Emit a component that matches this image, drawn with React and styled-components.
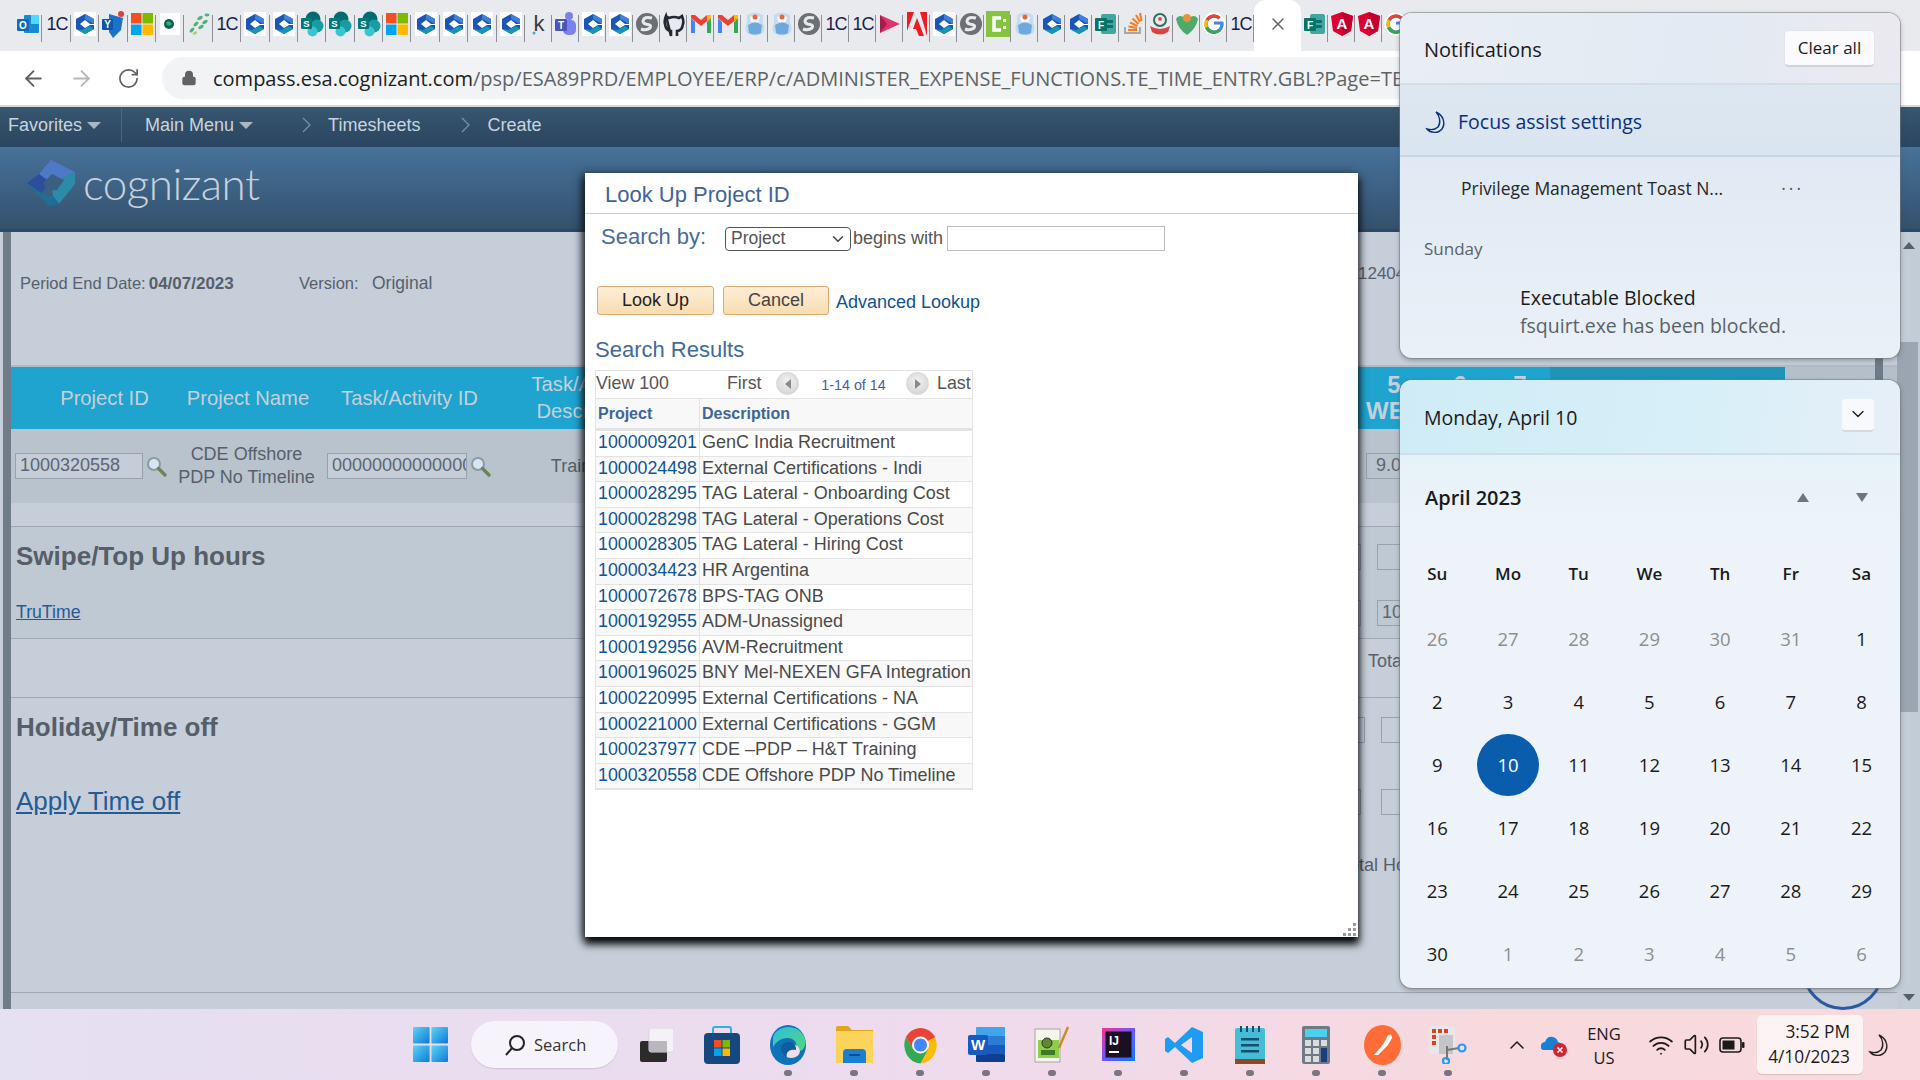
import React from 'react';
import styled, { createGlobalStyle } from 'styled-components';
import { ChevronDown, RotateCw, ArrowLeft, ArrowRight, Lock, X, Wifi, Volume2 } from 'lucide-react';

const GlobalStyle = createGlobalStyle`
  html, body {
    margin: 0;
    padding: 0;
    overflow: hidden;
    background: #c5ced9;
  }
  * { box-sizing: border-box; }
`;

const ARIAL = '"Liberation Sans", Arial, sans-serif';
const SEGOE = '"Open Sans", "Noto Sans", sans-serif';

const Desktop = styled.div`
  position: relative;
  width: 1920px;
  height: 1080px;
  overflow: hidden;
  display: flex;
  flex-direction: column;
  font-family: ${ARIAL};
`;

/* ---------- browser chrome ---------- */

const TabStrip = styled.div`
  height: 51px;
  flex: none;
  background: #e8eaed;
  padding-left: 14px;
  display: flex;
  align-items: stretch;
`;

const PinnedTab = styled.div`
  width: ${p => p.$w}px;
  flex: none;
  display: flex;
  align-items: center;
  justify-content: center;
  padding-bottom: 4px;
  position: relative;
  &::after {
    content: '';
    position: absolute;
    right: 0;
    top: 15px;
    height: 27px;
    width: 1px;
    background: #8b8e92;
  }
`;

const ActiveTab = styled.div`
  width: 47px;
  flex: none;
  background: #fff;
  border-radius: 12px 12px 0 0;
  display: flex;
  align-items: center;
  justify-content: center;
  color: #5f6368;
  padding-bottom: 4px;
`;

const AddressBar = styled.div`
  height: 56px;
  flex: none;
  background: #fff;
  border-bottom: 2px solid #d7d9dc;
  display: flex;
  align-items: center;
  padding: 0 20px 0 21px;
`;

const NavArrow = styled.div`
  width: 48px;
  flex: none;
  display: flex;
  align-items: center;
  color: ${p => p.$off ? '#b4b7bb' : '#5f6368'};
`;

const Omnibox = styled.div`
  flex: 1;
  height: 42px;
  margin-left: -3px;
  background: #f1f3f4;
  border-radius: 21px;
  display: flex;
  align-items: center;
  padding-left: 19px;
  overflow: hidden;
  white-space: nowrap;
  font-family: ${SEGOE};
  font-size: 20px;
  color: #5f6368;
`;

const UrlHost = styled.span`
  color: #202124;
  margin-left: 16px;
`;

/* ---------- portal header ---------- */

const NavBar = styled.div`
  height: 40px;
  flex: none;
  background: linear-gradient(#37566f, #2a4560);
  display: flex;
  align-items: center;
  color: #c9d4de;
  font-size: 18px;
  padding-bottom: 4px;
`;

const NavItem = styled.div`
  display: flex;
  align-items: center;
  gap: 5px;
  margin-left: ${p => p.$ml}px;
  height: 100%;
`;

const NavDivider = styled.div`
  width: 1px;
  height: 34px;
  background: #4a6780;
  margin-left: 20px;
`;

const Caret = styled.span`
  width: 0;
  height: 0;
  border-left: 7px solid transparent;
  border-right: 7px solid transparent;
  border-top: 7px solid #a9b8c6;
`;

const Crumb = styled.span`
  color: #7e93a7;
  display: flex;
  margin-right: 12px;
`;

const Banner = styled.div`
  height: 85px;
  flex: none;
  background: linear-gradient(#47729a, #33516c);
  border-bottom: 3px solid #2d4960;
  display: flex;
  align-items: center;
  padding: 0 0 10px 27px;
`;

const LogoText = styled.span`
  font-family: Lato, sans-serif;
  font-weight: 300;
  font-size: 44px;
  letter-spacing: -0.5px;
  line-height: 1;
  color: #c7d2dc;
  margin-left: 6px;
  margin-top: -1px;
`;

/* ---------- timesheet page behind the dialog ---------- */

const Content = styled.div`
  flex: 1;
  display: flex;
  background: #c5ced9;
  position: relative;
  min-height: 0;
  color: #56606c;
`;

const LeftEdge = styled.div`
  width: 8px;
  margin-left: 3px;
  flex: none;
  background: #707c88;
`;

const Main = styled.div`
  flex: 1;
  min-width: 0;
  display: flex;
  flex-direction: column;
  position: relative;
`;

const Scrollbar = styled.div`
  width: 23px;
  flex: none;
  display: flex;
  flex-direction: column;
  align-items: center;
  background: #c2ccd7;
  justify-content: space-between;
`;

const ScrollThumb = styled.div`
  width: 21px;
  height: 370px;
  margin-right: 2px;
  background: #9aa5b1;
  margin-top: -190px;
`;

const ScrollArrow = styled.div`
  width: 0;
  height: 0;
  margin: ${p => (p.$down ? '0 0 8px' : '10px 0 0')};
  border-left: 6px solid transparent;
  border-right: 6px solid transparent;
  ${p => (p.$down ? 'border-top: 7px solid #555f6a;' : 'border-bottom: 7px solid #555f6a;')}
`;

const Summary = styled.div`
  height: 135px;
  flex: none;
  display: flex;
  padding: 42px 0 0 9px;
  font-size: 16.5px;
`;

const SummaryField = styled.div`
  width: ${p => p.$w}px;
  flex: none;
  white-space: nowrap;
  font-size: ${p => p.$fs || 16.5}px;
  margin-top: ${p => p.$mt || 0}px;
`;

const StrongDate = styled.b`
  font-size: 17px;
  margin-left: 3px;
`;

const GridColumns = `
  display: grid;
  grid-template-columns: 161px 149px 175px 174px 688px 72px 60px 60px 235px;
`;

const GridHead = styled.div`
  ${GridColumns}
  height: 64px;
  flex: none;
  margin-top: -2px;
  font-size: 20.2px;
  color: #c6d0da;
  position: relative;
  border-top: 2px solid #b0bac5;
  background: #b5bfca;
`;

const HeadCell = styled.div`
  background: ${p => (p.$dim ? '#1f93b8' : '#1fa4cf')};
  display: flex;
  flex-direction: column;
  align-items: center;
  justify-content: center;
  text-align: center;
  line-height: 27px;
  padding-left: ${p => p.$pl || 0}px;
  white-space: nowrap;
  ${p => p.$bold && 'font-weight: 700; font-size: 24px; line-height: 26px;'}
`;

const DataRow = styled.div`
  ${GridColumns}
  height: 74px;
  flex: none;
  background: #b9c3ce;
  font-size: 18px;
`;

const DataCell = styled.div`
  display: flex;
  align-items: center;
  justify-content: ${p => (p.$center ? 'center' : 'flex-start')};
  text-align: center;
  gap: ${p => p.$gap || 0}px;
  padding-left: ${p => p.$pl || 0}px;
  line-height: 23px;
  white-space: nowrap;
  overflow: hidden;
`;

const GridInput = styled.div`
  width: ${p => p.$w}px;
  height: 26px;
  flex: none;
  border: 1px solid #98a2ae;
  background: ${p => (p.$plain ? 'transparent' : '#c4cdd8')};
  padding: 0 ${p => p.$pr || 0}px 0 ${p => p.$pl || 4}px;
  line-height: 23px;
  font-size: 18px;
  text-align: left;
  color: #5c6672;
  overflow: hidden;
  white-space: nowrap;
`;

const FillerRow = styled.div`
  height: 24px;
  flex: none;
  border-bottom: 1px solid #9fa9b4;
`;

const Section = styled.div`
  height: ${p => p.$h}px;
  flex: none;
  display: grid;
  grid-template-columns: 1289px 1fr;
  background: ${p => p.$bg || 'transparent'};
  border-bottom: 1px solid #9fa9b4;
`;

const SectionBody = styled.div`
  padding: 13px 0 0 5px;
`;

const SectionTitle = styled.h2`
  margin: 0;
  font-size: 26px;
  line-height: 32px;
  font-weight: 700;
  color: #555e69;
`;

const PageLink = styled.a`
  display: block;
  color: #255a92;
  font-size: ${p => p.$size}px;
  text-decoration: underline;
  margin-top: ${p => p.$mt}px;
  line-height: 1.2;
`;

const SideInputs = styled.div`
  display: grid;
  grid-template-columns: ${p => p.$cols || '61px 60px'};
  column-gap: 16px;
  align-content: start;
  row-gap: ${p => p.$gap}px;
  padding-top: ${p => p.$pt}px;
`;

const SideLabel = styled.div`
  font-size: 18px;
  grid-column: 1 / -1;
  white-space: nowrap;
  padding-left: ${p => p.$pl}px;
  margin-top: ${p => p.$mt || 0}px;
`;

const FloatingAction = styled.div`
  position: absolute;
  left: 1791px;
  top: 696px;
  width: 82px;
  height: 82px;
  border: 3px solid #2a5a9e;
  border-radius: 50%;
`;

const InnerBar = styled.div`
  position: absolute;
  left: 1864px;
  top: 120px;
  width: 8px;
  height: 40px;
  background: #6d7a87;
`;

/* ---------- lookup dialog ---------- */

const Modal = styled.div`
  position: absolute;
  left: 585px;
  top: 173px;
  width: 773px;
  height: 764px;
  background: #fff;
  box-shadow: -3px 0 8px rgba(30, 35, 45, 0.55), 0 6px 8px 1px #000;
  display: flex;
  flex-direction: column;
  color: #444;
`;

const ModalTitle = styled.div`
  height: 41px;
  flex: none;
  padding-left: 20px;
  border-bottom: 1px solid #c9ced6;
  font-size: 22px;
  line-height: 43px;
  color: #41639a;
`;

const SearchRow = styled.div`
  display: flex;
  align-items: center;
  padding: 12px 0 0 16px;
  height: 37px;
  flex: none;
  font-size: 18px;
  color: #555;
`;

const SearchLabel = styled.span`
  font-size: 22px;
  color: #4a6a99;
  width: 124px;
  flex: none;
  margin-top: -3px;
`;

const SelectBox = styled.div`
  width: 126px;
  height: 24px;
  flex: none;
  border: 1px solid #555;
  border-radius: 4px;
  padding: 0 3px 0 5px;
  display: flex;
  align-items: center;
  justify-content: space-between;
  font-size: 17.5px;
  color: #555;
  margin-right: 2px;
`;

const LookupInput = styled.div`
  width: 218px;
  height: 25px;
  margin-left: 4px;
  border: 1px solid #bbb;
`;

const ButtonRow = styled.div`
  display: flex;
  align-items: center;
  margin: 35px 0 0 12px;
  flex: none;
`;

const OrangeButton = styled.div`
  width: ${p => p.$w}px;
  height: 29px;
  margin-right: ${p => p.$mr}px;
  background: linear-gradient(#fdeed8, #f9dcb0);
  border: 1px solid #e0aa6f;
  border-radius: 3px;
  display: flex;
  align-items: center;
  justify-content: center;
  font-size: 18px;
  color: ${p => p.$muted ? '#444' : '#222'};
`;

const DialogLink = styled.a`
  color: #0e5294;
  font-size: 18px;
  padding-top: 3px;
`;

const ResultsTitle = styled.div`
  font-size: 22px;
  line-height: 24px;
  color: #3f6a9c;
  margin: 23px 0 8px 10px;
  flex: none;
`;

const ResultsTable = styled.div`
  width: 378px;
  margin-left: 10px;
  flex: none;
  border: 1px solid #e3e3e3;
`;

const PagerRow = styled.div`
  height: 28px;
  display: flex;
  align-items: center;
  font-size: 17.8px;
  color: #555;
  padding-bottom: 2px;
  border-bottom: 1px solid #e3e3e3;
`;

const PagerText = styled.span`
  width: ${p => p.$w}px;
  flex: none;
  white-space: nowrap;
  padding-left: ${p => p.$pl || 0}px;
`;

const PagerCount = styled.span`
  width: 107px;
  flex: none;
  text-align: center;
  font-size: 14.3px;
  color: #41639a;
  padding: 2px 0 0 2px;
`;

const PagerButton = styled.span`
  width: 23px;
  height: 23px;
  flex: none;
  border-radius: 50%;
  background: radial-gradient(circle at 50% 40%, #f2f2f2, #cfcfcf);
  border: 1px solid #d6d6d6;
  display: flex;
  align-items: center;
  justify-content: center;
  &::before {
    content: '';
    border-top: 5px solid transparent;
    border-bottom: 5px solid transparent;
    ${p => (p.$next ? 'border-left: 6px solid #8a8a8a;' : 'border-right: 6px solid #8a8a8a;')}
  }
`;

const ResultGrid = styled.div`
  display: grid;
  grid-template-columns: 104px 1fr;
  height: ${p => p.$h}px;
  background: ${p => p.$bg};
  border-bottom: ${p => p.$bb}px solid #e3e3e3;
`;

const ResultCell = styled.div`
  padding-left: 2px;
  line-height: ${p => p.$lh}px;
  font-size: ${p => p.$fs}px;
  font-weight: ${p => (p.$bold ? 700 : 400)};
  color: ${p => p.$color};
  white-space: nowrap;
  overflow: hidden;
  border-right: ${p => (p.$rule ? '1px solid #e3e3e3' : 'none')};
`;

const ResizeGrip = styled.svg`
  position: absolute;
  right: 1px;
  bottom: 1px;
`;

/* ---------- windows flyouts ---------- */

const Flyout = styled.div`
  position: absolute;
  left: 1400px;
  width: 500px;
  top: ${p => p.$top}px;
  height: ${p => p.$h}px;
  border-radius: 12px;
  box-shadow: 0 0 0 1px rgba(120, 125, 130, 0.55), 0 2px 5px rgba(60, 65, 70, 0.45);
  font-family: ${SEGOE};
  color: #1a1a1a;
  overflow: hidden;
  display: flex;
  flex-direction: column;
`;

const NotificationFlyout = styled(Flyout)`
  background: linear-gradient(#e7ecf3, #dfe9f3 30%, #e9f0f8);
`;

const CalendarFlyout = styled(Flyout)`
  background: #eef3fa;
`;

const NoteHeader = styled.div`
  height: 72px;
  flex: none;
  display: flex;
  align-items: center;
  justify-content: space-between;
  padding: 0 25px 0 24px;
  border-bottom: 2px solid #d3dee9;
  font-size: 20px;
  background: linear-gradient(100deg, #e9eef4, #e2eaf3 60%, #ece9f0);
`;

const NoteHeaderTitle = styled.span`
  padding-top: 3px;
`;

const ClearButton = styled.div`
  width: 91px;
  height: 37px;
  background: #fbfbfd;
  border: 1px solid #e3e5e8;
  border-bottom: 2px solid #cfd2d6;
  border-radius: 5px;
  font-size: 17px;
  display: flex;
  align-items: center;
  justify-content: center;
`;

const FocusRow = styled.div`
  height: 72px;
  flex: none;
  display: flex;
  align-items: center;
  gap: 10px;
  padding: 3px 0 0 24px;
  background: linear-gradient(#dde7f1, #d9e5f0);
  border-bottom: 2px solid #cad6e2;
  color: #0b2f7d;
  font-size: 19.5px;
`;

const NoteGroup = styled.div`
  display: flex;
  justify-content: space-between;
  padding: 19px 96px 0 61px;
  font-size: 17.5px;
  line-height: 24px;
  color: #262626;
`;

const Ellipsis = styled.span`
  letter-spacing: 3px;
  color: #555;
`;

const NoteDay = styled.div`
  margin: 37px 0 0 24px;
  font-size: 17px;
  line-height: 24px;
  color: #5b6168;
`;

const NoteBody = styled.div`
  margin: 23px 0 0 120px;
  font-size: 19.5px;
  line-height: 28px;
`;

const NoteDetail = styled.div`
  color: #5c6168;
`;

const CalHeader = styled.div`
  height: 75px;
  flex: none;
  display: flex;
  align-items: center;
  justify-content: space-between;
  padding: 0 26px 0 24px;
  border-bottom: 2px solid #d0dee7;
  background: linear-gradient(100deg, #cfecf6, #d6eff8 55%, #e7eff8);
  font-size: 19.5px;
`;

const CalHeaderTitle = styled.span`
  padding-top: 2px;
`;

const ChevronButton = styled.div`
  width: 32px;
  height: 33px;
  margin-top: -3px;
  background: #f7f9fc;
  border-radius: 4px;
  border-bottom: 2px solid #d5d9de;
  display: flex;
  align-items: center;
  justify-content: center;
`;

const MonthRow = styled.div`
  height: 85px;
  flex: none;
  display: flex;
  align-items: center;
  padding: 0 32px 0 25px;
  font-size: 20px;
  font-weight: 600;
  background: linear-gradient(#e6f2f9, #eef3fa);
`;

const MonthName = styled.span`
  flex: 1;
`;

const MonthArrow = styled.span`
  width: 0;
  height: 0;
  margin-left: 47px;
  border-left: 6.5px solid transparent;
  border-right: 6.5px solid transparent;
  ${p => (p.$down ? 'border-top: 9px solid #70757a;' : 'border-bottom: 9px solid #70757a;')}
`;

const DayGrid = styled.div`
  display: grid;
  grid-template-columns: repeat(7, 70.7px);
  grid-template-rows: 67px;
  grid-auto-rows: 63px;
  padding-left: 2px;
`;

const WeekName = styled.div`
  display: flex;
  align-items: center;
  justify-content: center;
  font-size: 17px;
  font-weight: 600;
`;

const Day = styled.div`
  display: flex;
  align-items: center;
  justify-content: center;
  font-size: 18.5px;
  color: ${p => (p.$muted ? '#8b8f94' : '#1a1a1a')};
`;

const Today = styled.span`
  width: 62px;
  height: 62px;
  border-radius: 50%;
  background: #0a5cad;
  color: #fff;
  font-weight: 500;
  display: flex;
  align-items: center;
  justify-content: center;
`;

/* ---------- taskbar ---------- */

const Taskbar = styled.div`
  height: 71px;
  flex: none;
  background: linear-gradient(90deg, #e5e0f2, #eddbee 45%, #f8d9dd 80%, #f9d9dd);
  display: flex;
  align-items: center;
  padding-left: 398px;
  font-family: ${SEGOE};
  color: #1b1b1b;
`;

const TaskIcon = styled.div`
  width: ${p => p.$w || 66}px;
  height: 71px;
  flex: none;
  position: relative;
  display: flex;
  align-items: center;
  justify-content: center;
  ${p => p.$open && `
    &::after {
      content: '';
      position: absolute;
      bottom: 4px;
      left: 50%;
      margin-left: -4px;
      width: 8px;
      height: 6px;
      border-radius: 3px;
      background: #7b7580;
    }
  `}
`;

const SearchPill = styled.div`
  width: 147px;
  height: 47px;
  margin: 0 7px 0 8px;
  flex: none;
  background: #f6f3fa;
  border-radius: 24px;
  box-shadow: 0 1px 1px rgba(120, 110, 130, 0.25);
  display: flex;
  align-items: center;
  gap: 7px;
  padding-left: 32px;
  font-size: 16.5px;
  color: #333;
`;

const Tray = styled.div`
  display: flex;
  align-items: center;
  margin-left: 21px;
`;

const TrayIcon = styled.div`
  width: ${p => p.$w}px;
  flex: none;
  display: flex;
  align-items: center;
  justify-content: center;
`;

const LangBox = styled.div`
  width: 50px;
  flex: none;
  font-size: 16.5px;
  line-height: 24px;
  text-align: center;
  margin: 0 14px 0 3px;
  padding-top: 2px;
`;

const ClockBox = styled.div`
  width: 106px;
  height: 59px;
  margin-left: 6px;
  flex: none;
  background: #fdf2f4;
  border-radius: 5px;
  box-shadow: 0 1px 1px rgba(150, 120, 130, 0.3);
  font-size: 17.3px;
  line-height: 25px;
  text-align: right;
  padding: 4px 13px 0 0;
`;

/* ---------- drawn icons ---------- */

const Cog = ({ size = 22, bg = '#fff' }) => (
  <svg width={size} height={24} viewBox="0 0 22 24">
    {bg && <rect width="22" height="24" fill={bg} />}
    <polygon points="11,2 20,7 20,17 11,22 2,17 2,7" fill="#1a56b8" />
    <polygon points="11,2 20,7 20,12 15,9 11,7" fill="#3f7fd8" />
    <polygon points="2,17 11,22 20,17 16,14 8,18" fill="#1696b3" />
    <polygon points="6,12 11,8 16,12 20,12 20,13 16,13 11,16" fill="#fff" />
  </svg>
);

const LogoLetter = ({ x, y, size, children }) => (
  <text x={x} y={y} textAnchor="middle" fontSize={size} fontWeight="700" fontFamily="Liberation Sans" fill="#fff">{children}</text>
);

const OneC = () => (
  <svg width="24" height="24" viewBox="0 0 24 24">
    <text x="12" y="18" textAnchor="middle" fontSize="18" fontWeight="400" letterSpacing="-1" fontFamily="Liberation Sans" fill="#1a1f4e">1C</text>
  </svg>
);

const MsLogo = () => (
  <svg width="22" height="24" viewBox="0 0 22 24">
    <rect x="0" y="1" width="10.5" height="10.5" fill="#f25022" />
    <rect x="11.5" y="1" width="10.5" height="10.5" fill="#7fba00" />
    <rect x="0" y="12.5" width="10.5" height="10.5" fill="#00a4ef" />
    <rect x="11.5" y="12.5" width="10.5" height="10.5" fill="#ffb900" />
  </svg>
);

const SharePoint = () => (
  <svg width="24" height="26" viewBox="0 0 24 26">
    <circle cx="13" cy="8" r="7.5" fill="#036c70" />
    <circle cx="17" cy="15" r="6.5" fill="#1a9ba1" />
    <circle cx="12.5" cy="20.5" r="5" fill="#37c6d0" />
    <rect x="1" y="7" width="11" height="11" rx="1" fill="#03787c" />
    <LogoLetter x="6.5" y="16" size="9.5">S</LogoLetter>
  </svg>
);

const Gmail = () => (
  <svg width="22" height="20" viewBox="0 0 22 20">
    <path d="M1 4 L1 19 L5 19 L5 8 Z" fill="#4285f4" />
    <path d="M21 4 L21 19 L17 19 L17 8 Z" fill="#34a853" />
    <path d="M1 4 L11 12 L21 4 L21 1 L17 1 L11 6 L5 1 L1 1 Z" fill="#ea4335" />
    <path d="M17 1 L21 1 L21 4 L17 7 Z" fill="#fbbc04" />
  </svg>
);

const Angel = () => (
  <svg width="22" height="26" viewBox="0 0 22 26">
    <path d="M3 4 Q11 -1 19 4 L19 12 Q22 17 19 22 Q11 27 3 22 Q0 17 3 12 Z" fill="#c4dcf1" />
    <path d="M4 14 Q11 9 18 14 L17 22 Q11 25 5 22 Z" fill="#6fa8dc" />
    <path d="M6 6 Q11 3 16 6 L15 11 L7 11 Z" fill="#f6f8fb" />
    <circle cx="11" cy="6" r="2.5" fill="#e8643c" />
  </svg>
);

const GrayS = () => (
  <svg width="24" height="24" viewBox="0 0 24 24">
    <circle cx="12" cy="12" r="11" fill="#6d7073" />
    <path d="M17 6 Q9 4 8 9 Q8 12 13 12.5 Q17 13 15 16 Q11 19 6 17" fill="none" stroke="#e8eaed" strokeWidth="3" />
  </svg>
);

const Google = () => (
  <svg width="24" height="24" viewBox="0 0 24 24">
    <circle cx="12" cy="12" r="11.5" fill="#fff" />
    <path d="M12 11 H20 A8 8 0 1 1 17.5 6.2" fill="none" stroke="#4285f4" strokeWidth="3.2" />
    <path d="M5 8 A8 8 0 0 1 17.5 6.2" fill="none" stroke="#ea4335" strokeWidth="3.2" />
    <path d="M4.6 15.5 A8 8 0 0 1 5 8" fill="none" stroke="#fbbc04" strokeWidth="3.2" />
    <path d="M4.6 15.5 A8 8 0 0 0 17.5 18" fill="none" stroke="#34a853" strokeWidth="3.2" />
  </svg>
);

const Forms = () => (
  <svg width="24" height="24" viewBox="0 0 24 24">
    <rect x="7" y="2" width="15" height="20" rx="2" fill="#41a5a0" />
    <rect x="11" y="8" width="8" height="3" fill="#0f6f6b" />
    <rect x="11" y="13" width="8" height="3" fill="#0f6f6b" />
    <rect x="1" y="6" width="12" height="13" rx="1" fill="#077568" />
    <LogoLetter x="7" y="16.5" size="10">F</LogoLetter>
  </svg>
);

const Angular = () => (
  <svg width="22" height="24" viewBox="0 0 22 24">
    <polygon points="11,0 22,4 20,19 11,24 2,19 0,4" fill="#dd0031" />
    <polygon points="11,0 22,4 20,19 11,24" fill="#c3002f" />
    <LogoLetter x="11" y="17" size="15">A</LogoLetter>
  </svg>
);

const TAB_ICONS = {
  outlook: () => (
    <svg width="24" height="24" viewBox="0 0 24 24">
      <rect x="8" y="3" width="15" height="18" rx="1" fill="#1a8ad4" />
      <rect x="15" y="3" width="8" height="9" fill="#50d9ff" />
      <rect x="1" y="7" width="12" height="12" rx="1" fill="#0f6cbd" />
      <LogoLetter x="7" y="16.5" size="10">O</LogoLetter>
    </svg>
  ),
  oneC: OneC,
  cog: () => <Cog />,
  bigCog: () => <Cog size={24} bg={null} />,
  yammer: () => (
    <svg width="24" height="28" viewBox="0 0 24 28">
      <path d="M8 4 L22 8 L20 20 L12 28 L8 22 Z" fill="#1b73c7" />
      <rect x="1" y="9" width="11" height="11" rx="1" fill="#0a58ab" />
      <circle cx="20" cy="4" r="3" fill="#d8433e" />
      <LogoLetter x="6.5" y="18" size="10">Y</LogoLetter>
    </svg>
  ),
  ms: MsLogo,
  earth: () => (
    <svg width="22" height="24" viewBox="0 0 22 24">
      <rect x="1" y="1" width="20" height="22" fill="#fff" />
      <circle cx="10" cy="12" r="5" fill="#0f5b5f" />
      <path d="M7 10 Q11 8 13 12 Q10 15 8 13 Z" fill="#28b765" />
    </svg>
  ),
  dots: () => (
    <svg width="24" height="24" viewBox="0 0 24 24" fill="#4eb37b">
      <ellipse cx="20" cy="3" rx="2.5" ry="1.4" /><ellipse cx="13" cy="6" rx="3" ry="1.6" transform="rotate(-30 13 6)" />
      <ellipse cx="18" cy="10" rx="3" ry="1.6" transform="rotate(-30 18 10)" /><ellipse cx="9" cy="12" rx="3" ry="1.6" transform="rotate(-40 9 12)" />
      <ellipse cx="14" cy="15" rx="3" ry="1.6" transform="rotate(-30 14 15)" /><ellipse cx="5" cy="18" rx="3" ry="1.6" transform="rotate(-50 5 18)" />
      <ellipse cx="8" cy="21" rx="2.5" ry="1.4" transform="rotate(-30 8 21)" fill="#a7d16a" />
    </svg>
  ),
  sharepoint: SharePoint,
  k: () => (
    <svg width="22" height="26" viewBox="0 0 22 26">
      <text x="11" y="20" textAnchor="middle" fontSize="22" fontFamily="Liberation Sans" fill="#3b3b3b">k</text>
      <circle cx="6" cy="22" r="1.5" fill="#45a5dd" />
    </svg>
  ),
  teams: () => (
    <svg width="24" height="26" viewBox="0 0 24 26">
      <circle cx="15" cy="5" r="4" fill="#7b83eb" />
      <rect x="9" y="9" width="13" height="15" rx="5" fill="#7b83eb" />
      <rect x="1" y="8" width="12" height="12" rx="1" fill="#4b53bc" />
      <LogoLetter x="7" y="17.5" size="10">T</LogoLetter>
    </svg>
  ),
  grayS: GrayS,
  github: () => (
    <svg width="24" height="26" viewBox="0 0 24 26">
      <path d="M4 5 L7 7 Q12 5 17 7 L20 5 Q22 10 21 13 Q20 20 15 20 L15 25 M9 25 L9 20 Q4 20 3 13 Q2 10 4 5 Z" fill="none" stroke="#24292f" strokeWidth="2.6" />
    </svg>
  ),
  gmail: Gmail,
  angel: Angel,
  play: () => (
    <svg width="22" height="22" viewBox="0 0 22 22">
      <polygon points="1,2 21,11 1,20" fill="#e0336f" />
      <polygon points="1,2 8,11 1,20" fill="#a51d4c" />
    </svg>
  ),
  adobe: () => (
    <svg width="22" height="26" viewBox="0 0 22 26">
      <polygon points="1,1 8,1 1,20" fill="#ed1c24" />
      <polygon points="14,1 21,1 21,25" fill="#ed1c24" />
      <polygon points="11,7 18,25 13,25 10,18 7,18" fill="#ed1c24" />
    </svg>
  ),
  green: () => (
    <svg width="24" height="26" viewBox="0 0 24 26">
      <rect width="24" height="26" fill="#86c440" />
      <path d="M15 7 H8 V19 H15" fill="none" stroke="#fff" strokeWidth="3.5" />
      <rect x="17" y="8" width="3" height="3" fill="#fff" />
      <rect x="17" y="15" width="3" height="3" fill="#fff" />
    </svg>
  ),
  forms: Forms,
  stack: () => (
    <svg width="22" height="24" viewBox="0 0 22 24">
      <path d="M3 15 V21 H18 V15" fill="none" stroke="#a5a8ab" strokeWidth="2" />
      <g stroke="#f38024" strokeWidth="2.2">
        <path d="M6 18 H15" /><path d="M6.5 14.5 L15 16" /><path d="M8 10.5 L15.5 14" />
        <path d="M10.5 6.5 L16.5 12" /><path d="M14 3 L18 10" /><path d="M18 1 L19.5 9" />
      </g>
    </svg>
  ),
  emblem: () => (
    <svg width="24" height="26" viewBox="0 0 24 26">
      <circle cx="12" cy="9" r="6" fill="none" stroke="#2c6f5f" strokeWidth="2" />
      <circle cx="12" cy="8" r="2" fill="#e0564a" />
      <path d="M2 15 Q12 21 22 15 L20 21 Q12 26 4 21 Z" fill="#d9453e" />
    </svg>
  ),
  leaf: () => (
    <svg width="24" height="26" viewBox="0 0 24 26">
      <path d="M12 8 Q4 2 1 8 Q3 18 12 24 Q21 18 23 8 Q20 2 12 8 Z" fill="#4fa96b" />
      <circle cx="12" cy="7" r="4" fill="#e8923c" />
    </svg>
  ),
  google: Google,
  angular: Angular,
};

const TAB_LIST = [
  'outlook', 'oneC', 'cog', 'yammer', 'ms', 'earth', 'dots', 'oneC', 'cog', 'cog', 'sharepoint', 'sharepoint',
  'sharepoint', 'ms', 'cog', 'cog', 'cog', 'cog', 'k', 'teams', 'cog', 'cog', 'grayS', 'github', 'gmail', 'gmail',
  'angel', 'angel', 'grayS', 'oneC', 'oneC', 'play', 'adobe', 'cog', 'grayS', 'green', 'angel', 'bigCog', 'bigCog',
  'forms', 'stack', 'emblem', 'leaf', 'google', 'oneC',
];

const TABS_AFTER = ['forms', 'angular', 'angular', 'google', 'oneC'];

const TabIcon = ({ name }) => {
  const Icon = TAB_ICONS[name];
  return <Icon />;
};

const MagnifierGlass = () => (
  <svg width="21" height="21" viewBox="0 0 21 21" style={{ flex: 'none' }}>
    <circle cx="8" cy="8" r="6" fill="#d5e6f2" stroke="#8a9aa4" strokeWidth="2" />
    <path d="M12.5 12.5 L19 19" stroke="#6d8455" strokeWidth="3.4" strokeLinecap="round" />
  </svg>
);

const CognizantMark = () => (
  <svg width="50" height="46" viewBox="0 0 50 46">
    <polygon points="24,0 48,12 24,23 12,14" fill="#4d79c6" />
    <polygon points="12,14 24,23 14,33 0,23" fill="#2a4f9c" />
    <polygon points="24,23 48,12 48,24 32,44 26,36" fill="#2d8aa8" />
    <polygon points="14,33 26,36 32,44 22,46 0,23" fill="#1d6f94" />
    <polygon points="16,23 25,14 37,20 30,30 20,31" fill="#3b5f80" />
  </svg>
);

const Moon = ({ color = '#0b2f7d', size = 24 }) => (
  <svg width={size} height={size} viewBox="0 0 22 24" fill="none" stroke={color} strokeWidth="1.4">
    <path d="M11 2 C15 6 16 13 13 17 C10 20 6 20 2 19 C5 23 13 24 17 19 C21 13 18 5 11 2 Z" />
  </svg>
);

const Windows = () => (
  <svg width="35" height="35" viewBox="0 0 35 35">
    <defs>
      <linearGradient id="win" x1="0" y1="0" x2="1" y2="1">
        <stop offset="0" stopColor="#5fd3f7" />
        <stop offset="1" stopColor="#0b7ad6" />
      </linearGradient>
    </defs>
    <rect x="0" y="0" width="16.6" height="16.6" rx="1" fill="url(#win)" />
    <rect x="18.4" y="0" width="16.6" height="16.6" rx="1" fill="url(#win)" />
    <rect x="0" y="18.4" width="16.6" height="16.6" rx="1" fill="url(#win)" />
    <rect x="18.4" y="18.4" width="16.6" height="16.6" rx="1" fill="url(#win)" />
  </svg>
);

const TaskView = () => (
  <svg width="34" height="34" viewBox="0 0 34 34">
    <rect x="0" y="13" width="27" height="21" rx="2" fill="#2b2b2b" />
    <rect x="9" y="0" width="25" height="24" rx="2" fill="#f4f2f6" stroke="#d8d6dc" />
    <rect x="9" y="13" width="18" height="11" fill="#b9b7bd" />
  </svg>
);

const Store = () => (
  <svg width="36" height="38" viewBox="0 0 36 38">
    <path d="M9 8 V3 Q9 1 11 1 H25 Q27 1 27 3 V8" fill="none" stroke="#2fb0e8" strokeWidth="2" />
    <rect x="0" y="7" width="36" height="31" rx="4" fill="#17477f" />
    <rect x="10" y="14" width="7.5" height="7.5" fill="#f25022" />
    <rect x="18.5" y="14" width="7.5" height="7.5" fill="#7fba00" />
    <rect x="10" y="22.5" width="7.5" height="7.5" fill="#00a4ef" />
    <rect x="18.5" y="22.5" width="7.5" height="7.5" fill="#ffb900" />
  </svg>
);

const Edge = () => (
  <svg width="38" height="40" viewBox="0 0 38 40">
    <defs>
      <linearGradient id="edgeTop" x1="0" y1="0" x2="1" y2="1">
        <stop offset="0" stopColor="#33bde0" />
        <stop offset="1" stopColor="#4fd87a" />
      </linearGradient>
    </defs>
    <ellipse cx="19" cy="20" rx="18" ry="20" fill="#0c73b8" />
    <path d="M4 12 C8 0 30 -3 36 14 C38 22 33 28 26 26 C30 20 26 13 19 13 C12 13 8 16 4 22 Z" fill="url(#edgeTop)" />
    <ellipse cx="22" cy="26" rx="9" ry="7" fill="#f0dceb" />
    <path d="M12 22 C16 14 28 16 27 25 C22 24 16 26 18 33 C14 31 12 27 12 22 Z" fill="#0e5da0" />
  </svg>
);

const Folder = () => (
  <svg width="37" height="37" viewBox="0 0 37 37">
    <path d="M0 2 Q0 0 2 0 H12 L16 4 H37 V37 H0 Z" fill="#e0a51f" />
    <rect x="0" y="5" width="37" height="32" rx="1" fill="#fcd45c" />
    <path d="M7 37 V27 Q7 23 11 23 H26 Q30 23 30 27 V37 Z" fill="#1b80d0" />
    <rect x="13" y="28" width="11" height="2" fill="#0f4e8f" />
  </svg>
);

const Chrome = () => (
  <svg width="37" height="40" viewBox="0 0 48 48">
    <path d="M24 24 L43 14 A22 24 0 0 0 5 14 L14 29 Z" fill="#ea4335" />
    <path d="M24 24 L14 29 L5 14 A22 24 0 0 0 24 48 L34 30 Z" fill="#34a853" />
    <path d="M24 24 L43 14 A22 24 0 0 1 24 48 L34 30 Z" fill="#fbbc04" />
    <circle cx="24" cy="24" r="11" fill="#fff" />
    <circle cx="24" cy="24" r="8.5" fill="#4285f4" />
  </svg>
);

const Word = () => (
  <svg width="37" height="35" viewBox="0 0 37 35">
    <rect x="8" y="0" width="29" height="9" rx="1" fill="#41a5ee" />
    <rect x="8" y="9" width="29" height="9" fill="#2b7cd3" />
    <rect x="8" y="18" width="29" height="9" fill="#185abd" />
    <rect x="8" y="27" width="29" height="8" rx="1" fill="#103f91" />
    <rect x="0" y="8" width="20" height="20" rx="2" fill="#185abd" />
    <LogoLetter x="10" y="23" size="15">W</LogoLetter>
  </svg>
);

const NotepadPlus = () => (
  <svg width="36" height="38" viewBox="0 0 36 38">
    <rect x="1" y="3" width="25" height="33" fill="#f4f6ee" stroke="#a6a6a0" />
    <rect x="4" y="14" width="21" height="18" fill="#8fce4d" />
    <circle cx="13" cy="17" r="5" fill="#5c8a2e" stroke="#333" />
    <rect x="7" y="24" width="14" height="5" fill="#3e7a23" />
    <path d="M34 1 L25 22" stroke="#c98b2b" strokeWidth="2.4" />
  </svg>
);

const IntelliJ = () => (
  <svg width="33" height="33" viewBox="0 0 33 33">
    <defs>
      <linearGradient id="ij" x1="0" y1="0" x2="1" y2="1">
        <stop offset="0" stopColor="#ff318c" />
        <stop offset="0.5" stopColor="#6b57ff" />
        <stop offset="1" stopColor="#087cfa" />
      </linearGradient>
    </defs>
    <rect width="33" height="33" fill="url(#ij)" />
    <rect x="3.5" y="3.5" width="26" height="26" fill="#1a1024" />
    <text x="7" y="17" fontSize="12" fontWeight="700" fontFamily="Liberation Sans" fill="#fff">IJ</text>
    <rect x="7" y="23" width="10" height="2" fill="#fff" />
  </svg>
);

const VsCode = () => (
  <svg width="38" height="38" viewBox="0 0 38 38">
    <path d="M27 1 L38 6 V32 L27 37 L10 21 L3 27 L0 25 V13 L3 11 L10 17 Z M27 11 L16 19 L27 27 Z" fill="#1f9cf0" fillRule="evenodd" />
  </svg>
);

const Notepad = () => (
  <svg width="32" height="38" viewBox="0 0 32 38">
    <rect x="1" y="2" width="30" height="36" rx="2" fill="#45bcd8" />
    <rect x="1" y="33" width="30" height="5" fill="#8c4a1e" />
    <g fill="#14506b">
      <rect x="7" y="12" width="18" height="2.5" /><rect x="7" y="18" width="18" height="2.5" /><rect x="7" y="24" width="18" height="2.5" />
      <rect x="6" y="0" width="2" height="6" /><rect x="12" y="0" width="2" height="6" /><rect x="18" y="0" width="2" height="6" /><rect x="24" y="0" width="2" height="6" />
    </g>
  </svg>
);

const Calculator = () => (
  <svg width="28" height="38" viewBox="0 0 28 38">
    <rect width="28" height="38" rx="2" fill="#6f7a84" />
    <rect x="3" y="3" width="22" height="8" fill="#4cd0ee" />
    <g fill="#d8dde1">
      <rect x="3" y="14" width="6" height="6" /><rect x="11" y="14" width="6" height="6" /><rect x="19" y="14" width="6" height="6" />
      <rect x="3" y="22" width="6" height="6" /><rect x="11" y="22" width="6" height="6" />
      <rect x="3" y="30" width="6" height="6" /><rect x="11" y="30" width="6" height="6" />
    </g>
    <rect x="19" y="22" width="6" height="14" fill="#16407f" />
  </svg>
);

const Postman = () => (
  <svg width="37" height="40" viewBox="0 0 37 40">
    <ellipse cx="18.5" cy="20" rx="18.5" ry="20" fill="#ff6c37" />
    <path d="M10 30 L20 18 L24 10 Q28 8 28 13 L24 20 L14 30" fill="#fff" />
  </svg>
);

const SnipTool = () => (
  <svg width="38" height="38" viewBox="0 0 38 38">
    <rect x="0" y="0" width="26" height="28" rx="3" fill="#e7e8ea" />
    <g fill="#d9431e">
      <rect x="3" y="3" width="4" height="4" /><rect x="9" y="3" width="4" height="4" /><rect x="15" y="3" width="4" height="4" />
      <rect x="3" y="9" width="4" height="4" /><rect x="3" y="15" width="4" height="4" />
    </g>
    <rect x="10" y="9" width="14" height="19" fill="#c3c5c8" />
    <path d="M18 20 V34" stroke="#777" strokeWidth="2" />
    <path d="M18 24 L30 22" stroke="#777" strokeWidth="2" />
    <circle cx="33" cy="22" r="3.5" fill="none" stroke="#1f9cf0" strokeWidth="2.2" />
    <circle cx="17" cy="35" r="3" fill="none" stroke="#1f9cf0" strokeWidth="2.2" />
  </svg>
);

const SearchGlyph = () => (
  <svg width="24" height="24" viewBox="0 0 24 24" fill="none" stroke="#222" strokeWidth="2">
    <circle cx="14" cy="10" r="7" />
    <path d="M9 15 L3 22" />
  </svg>
);

const Cloud = () => (
  <svg width="28" height="26" viewBox="0 0 28 26">
    <path d="M4 18 Q0 18 1 13 Q2 10 5 10 Q7 4 13 5 Q17 6 18 10 Q22 11 21 16 L19 18 Z" fill="#1780d4" />
    <circle cx="20" cy="18" r="7" fill="#d32232" />
    <path d="M17.5 15.5 L22.5 20.5 M22.5 15.5 L17.5 20.5" stroke="#fff" strokeWidth="1.6" />
  </svg>
);

const Battery = () => (
  <svg width="26" height="16" viewBox="0 0 26 16">
    <rect x="1" y="1" width="21" height="14" rx="3" fill="none" stroke="#1b1b1b" strokeWidth="1.6" />
    <rect x="3.5" y="3.5" width="12" height="9" fill="#1b1b1b" />
    <rect x="23" y="5" width="2.5" height="6" rx="1" fill="#1b1b1b" />
  </svg>
);

const CrumbArrow = () => (
  <Crumb>
    <svg width="9" height="16" viewBox="0 0 9 16" fill="none" stroke="currentColor" strokeWidth="1.2"><path d="M1 1 L8 8 L1 15" /></svg>
  </Crumb>
);

const TASKBAR_APPS = [
  { Icon: Store, open: false },
  { Icon: Edge, open: true },
  { Icon: Folder, open: true },
  { Icon: Chrome, open: true },
  { Icon: Word, open: true },
  { Icon: NotepadPlus, open: true },
  { Icon: IntelliJ, open: true },
  { Icon: VsCode, open: true },
  { Icon: Notepad, open: true },
  { Icon: Calculator, open: true },
  { Icon: Postman, open: true },
  { Icon: SnipTool, open: true },
];

const RESULTS = [
  ['1000009201', 'GenC India Recruitment'],
  ['1000024498', 'External Certifications - Indi'],
  ['1000028295', 'TAG Lateral - Onboarding Cost'],
  ['1000028298', 'TAG Lateral - Operations Cost'],
  ['1000028305', 'TAG Lateral - Hiring Cost'],
  ['1000034423', 'HR Argentina'],
  ['1000072678', 'BPS-TAG ONB'],
  ['1000192955', 'ADM-Unassigned'],
  ['1000192956', 'AVM-Recruitment'],
  ['1000196025', 'BNY Mel-NEXEN GFA Integration'],
  ['1000220995', 'External Certifications - NA'],
  ['1000221000', 'External Certifications - GGM'],
  ['1000237977', 'CDE –PDP – H&T Training'],
  ['1000320558', 'CDE Offshore PDP No Timeline'],
];

const WEEK = ['Su', 'Mo', 'Tu', 'We', 'Th', 'Fr', 'Sa'];

const DAYS = [
  [26, 1], [27, 1], [28, 1], [29, 1], [30, 1], [31, 1], [1], [2], [3], [4], [5], [6], [7], [8], [9], [10], [11],
  [12], [13], [14], [15], [16], [17], [18], [19], [20], [21], [22], [23], [24], [25], [26], [27], [28], [29], [30],
  [1, 1], [2, 1], [3, 1], [4, 1], [5, 1], [6, 1],
];

const App = () => (
  <Desktop>
    <GlobalStyle />

    <TabStrip>
      {TAB_LIST.map((name, i) => (
        <PinnedTab key={i} $w={i < 18 ? 28.4 : 27}><TabIcon name={name} /></PinnedTab>
      ))}
      <ActiveTab><X size={20} strokeWidth={1.8} /></ActiveTab>
      {TABS_AFTER.map((name, i) => (
        <PinnedTab key={i} $w={27}><TabIcon name={name} /></PinnedTab>
      ))}
    </TabStrip>

    <AddressBar>
      <NavArrow><ArrowLeft size={25} strokeWidth={1.8} /></NavArrow>
      <NavArrow $off><ArrowRight size={25} strokeWidth={1.8} /></NavArrow>
      <NavArrow><RotateCw size={23} strokeWidth={1.8} /></NavArrow>
      <Omnibox>
        <Lock size={16} fill="#5f6368" strokeWidth={2} />
        <UrlHost>compass.esa.cognizant.com</UrlHost>
        /psp/ESA89PRD/EMPLOYEE/ERP/c/ADMINISTER_EXPENSE_FUNCTIONS.TE_TIME_ENTRY.GBL?Page=TE_TIME_ENTRY
      </Omnibox>
    </AddressBar>

    <NavBar>
      <NavItem $ml={8}>Favorites <Caret /></NavItem>
      <NavDivider />
      <NavItem $ml={23}>Main Menu <Caret /></NavItem>
      <NavItem $ml={49}><CrumbArrow />Timesheets</NavItem>
      <NavItem $ml={41}><CrumbArrow />Create</NavItem>
    </NavBar>

    <Banner>
      <CognizantMark />
      <LogoText>cognizant</LogoText>
    </Banner>

    <Content>
      <LeftEdge />
      <Main>
        <Summary>
          <SummaryField $w={279}>Period End Date:<StrongDate>04/07/2023</StrongDate></SummaryField>
          <SummaryField $w={73}>Version:</SummaryField>
          <SummaryField $w={986} $fs={17.5} $mt={-1}>Original</SummaryField>
          <SummaryField $w={60} $fs={17} $mt={-10}>12404</SummaryField>
        </Summary>

        <GridHead>
          <HeadCell $pl={26}>Project ID</HeadCell>
          <HeadCell $pl={3}>Project Name</HeadCell>
          <HeadCell $pl={2}>Task/Activity ID</HeadCell>
          <HeadCell $pl={8}><span>Task/Activity</span><span>Description</span></HeadCell>
          <HeadCell />
          <HeadCell $bold><span>5</span><span>WED</span></HeadCell>
          <HeadCell $bold><span>6</span><span>THU</span></HeadCell>
          <HeadCell $bold><span>7</span><span>FRI</span></HeadCell>
          <HeadCell $dim>Total</HeadCell>
        </GridHead>

        <DataRow>
          <DataCell $pl={4} $gap={3}>
            <GridInput $w={128}>1000320558</GridInput>
            <MagnifierGlass />
          </DataCell>
          <DataCell $center><div>CDE Offshore<br />PDP No Timeline</div></DataCell>
          <DataCell $pl={6} $gap={3}>
            <GridInput $w={140} $pr={3}>000000000000000</GridInput>
            <MagnifierGlass />
          </DataCell>
          <DataCell $center>Training</DataCell>
          <DataCell />
          <DataCell $pl={8}><GridInput $w={59} $plain $pl={9}>9.0</GridInput></DataCell>
          <DataCell />
          <DataCell />
          <DataCell />
        </DataRow>

        <FillerRow />

        <Section $h={112} $bg="#bfc9d4">
          <SectionBody>
            <SectionTitle>Swipe/Top Up hours</SectionTitle>
            <PageLink href="#" $size={17.7} $mt={30}>TruTime</PageLink>
          </SectionBody>
          <SideInputs $pt={17} $gap={30}>
            <GridInput $w={61} $plain />
            <GridInput $w={60} $plain />
            <GridInput $w={61} $plain />
            <GridInput $w={60} $plain>10</GridInput>
          </SideInputs>
        </Section>

        <Section $h={59}>
          <div />
          <SideInputs $pt={12} $gap={0}>
            <SideLabel $pl={68}>Total</SideLabel>
          </SideInputs>
        </Section>

        <Section $h={295}>
          <SectionBody>
            <SectionTitle>Holiday/Time off</SectionTitle>
            <PageLink href="#" $size={26} $mt={43}>Apply Time off</PageLink>
          </SectionBody>
          <SideInputs $pt={19} $gap={46} $cols="65px 60px">
            <GridInput $w={65} $plain />
            <GridInput $w={60} $plain />
            <GridInput $w={61} $plain />
            <GridInput $w={60} $plain />
            <SideLabel $pl={40} $mt={-6}>Total Hours</SideLabel>
          </SideInputs>
        </Section>

        <InnerBar />
        <FloatingAction />
      </Main>
      <Scrollbar>
        <ScrollArrow />
        <ScrollThumb />
        <ScrollArrow $down />
      </Scrollbar>
    </Content>

    <Taskbar>
      <TaskIcon $w={65}><Windows /></TaskIcon>
      <SearchPill><SearchGlyph />Search</SearchPill>
      <TaskIcon $w={64}><TaskView /></TaskIcon>
      {TASKBAR_APPS.map(({ Icon, open }, i) => (
        <TaskIcon key={i} $open={open}><Icon /></TaskIcon>
      ))}
      <Tray>
        <TrayIcon $w={30}><ChevronDown size={24} strokeWidth={1.5} style={{ transform: 'scaleY(-1)' }} /></TrayIcon>
        <TrayIcon $w={44}><Cloud /></TrayIcon>
        <LangBox>ENG<br />US</LangBox>
        <TrayIcon $w={36}><Wifi size={26} strokeWidth={1.7} /></TrayIcon>
        <TrayIcon $w={34}><Volume2 size={27} strokeWidth={1.5} /></TrayIcon>
        <TrayIcon $w={38}><Battery /></TrayIcon>
        <ClockBox>3:52 PM<br />4/10/2023</ClockBox>
        <TrayIcon $w={32}><Moon color="#222" size={24} /></TrayIcon>
      </Tray>
    </Taskbar>

    <Modal>
      <ModalTitle>Look Up Project ID</ModalTitle>
      <SearchRow>
        <SearchLabel>Search by:</SearchLabel>
        <SelectBox>Project <ChevronDown size={18} strokeWidth={2} color="#444" /></SelectBox>
        <span>begins with</span>
        <LookupInput />
      </SearchRow>
      <ButtonRow>
        <OrangeButton $w={117} $mr={9}>Look Up</OrangeButton>
        <OrangeButton $w={106} $mr={7} $muted>Cancel</OrangeButton>
        <DialogLink>Advanced Lookup</DialogLink>
      </ButtonRow>
      <ResultsTitle>Search Results</ResultsTitle>
      <ResultsTable>
        <PagerRow>
          <PagerText $w={131}>View 100</PagerText>
          <PagerText $w={49}>First</PagerText>
          <PagerButton />
          <PagerCount>1-14 of 14</PagerCount>
          <PagerButton $next />
          <PagerText $w={46} $pl={8}>Last</PagerText>
        </PagerRow>
        <ResultGrid $h={32} $bg="#f8f8f8" $bb={3}>
          <ResultCell $lh={30} $fs={16} $bold $color="#3e6597" $rule>Project</ResultCell>
          <ResultCell $lh={30} $fs={16} $bold $color="#3e6597">Description</ResultCell>
        </ResultGrid>
        {RESULTS.map(([id, desc], i) => (
          <ResultGrid key={id} $h={25.6} $bg={i % 2 ? '#f8f8f8' : '#fff'} $bb={1}>
            <ResultCell $lh={23} $fs={17.8} $color="#0f5595" $rule>{id}</ResultCell>
            <ResultCell $lh={23} $fs={18} $color="#4a4a4a">{desc}</ResultCell>
          </ResultGrid>
        ))}
      </ResultsTable>
      <ResizeGrip width="14" height="14" viewBox="0 0 14 14" fill="#9a9a9a">
        <rect x="10" y="1" width="3" height="3" />
        <rect x="5" y="6" width="3" height="3" />
        <rect x="10" y="6" width="3" height="3" />
        <rect x="0" y="11" width="3" height="3" />
        <rect x="5" y="11" width="3" height="3" />
        <rect x="10" y="11" width="3" height="3" />
      </ResizeGrip>
    </Modal>

    <NotificationFlyout $top={13} $h={345}>
      <NoteHeader>
        <NoteHeaderTitle>Notifications</NoteHeaderTitle>
        <ClearButton>Clear all</ClearButton>
      </NoteHeader>
      <FocusRow><Moon />Focus assist settings</FocusRow>
      <NoteGroup>
        <span>Privilege Management Toast N...</span>
        <Ellipsis>···</Ellipsis>
      </NoteGroup>
      <NoteDay>Sunday</NoteDay>
      <NoteBody>
        Executable Blocked
        <NoteDetail>fsquirt.exe has been blocked.</NoteDetail>
      </NoteBody>
    </NotificationFlyout>

    <CalendarFlyout $top={380} $h={608}>
      <CalHeader>
        <CalHeaderTitle>Monday, April 10</CalHeaderTitle>
        <ChevronButton><ChevronDown size={20} strokeWidth={1.6} /></ChevronButton>
      </CalHeader>
      <MonthRow>
        <MonthName>April 2023</MonthName>
        <MonthArrow />
        <MonthArrow $down />
      </MonthRow>
      <DayGrid>
        {WEEK.map(w => <WeekName key={w}>{w}</WeekName>)}
        {DAYS.map(([d, muted], i) => (
          <Day key={i} $muted={muted}>{d === 10 ? <Today>10</Today> : d}</Day>
        ))}
      </DayGrid>
    </CalendarFlyout>
  </Desktop>
);

export default App;
